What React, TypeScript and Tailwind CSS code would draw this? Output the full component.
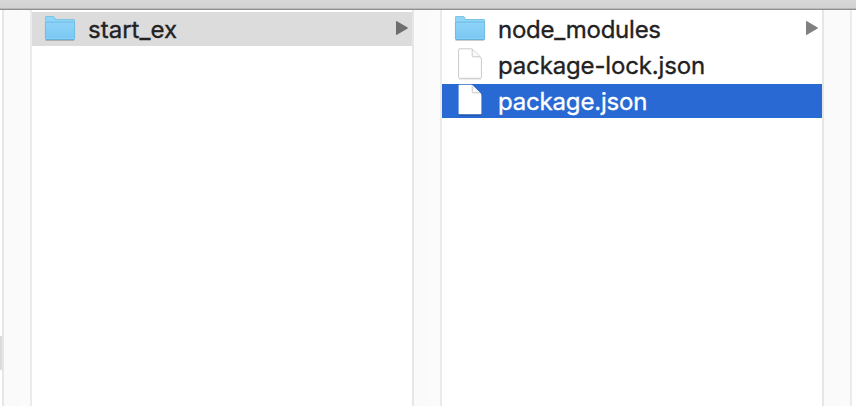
type Kind = 'folder' | 'file';

function FolderIcon() {
  return (
    <svg className="block h-[34px] w-[34px]" viewBox="0 0 34 34">
      <defs>
        <linearGradient id="front" x1="0" y1="0" x2="0" y2="1">
          <stop offset="0" stopColor="#8fd3f8" />
          <stop offset="1" stopColor="#77c7f3" />
        </linearGradient>
      </defs>
      <path d="M3.5 28.5H32.2" stroke="#000" strokeOpacity=".2" strokeWidth="1" />
      <path d="M3 27V5.4Q3 4 4.3 4H10.8Q12 4 12.6 5L13.8 7H31.7Q33 7 33 8.3V27Z" fill="#7ac4e8" />
      <path d="M3.8 9.4V5.8Q3.8 5 4.6 5H10.6Q11.5 5 12 6L13.2 8H31.4Q32.2 8 32.2 8.7V9.4Z" fill="#91d5f6" />
      <path d="M3 10H33V26.8Q33 28 31.7 28H4.3Q3 28 3 26.8Z" fill="url(#front)" />
      <path d="M3.8 10.3H32.2" stroke="#70bfe8" strokeWidth=".9" />
      <path d="M3.4 10V27M32.6 10V27" stroke="#6bb7df" strokeWidth=".8" />
      <path d="M3.8 26.3H32.2" stroke="#91d2f5" strokeWidth=".8" />
      <path d="M3.8 27.5H32.2" stroke="#65b0d9" strokeWidth="1" />
    </svg>
  );
}

function FileIcon({ selected = false }: { selected?: boolean }) {
  return (
    <svg className="block h-[34px] w-[34px]" viewBox="0 0 34 34">
      <path d="M7 31H29" stroke="#000" strokeOpacity={selected ? 0.35 : 0.15} strokeWidth="1" />
      <path
        d="M7.2 .8H19Q20.2 .8 21.2 1.7L28.4 9Q29.4 10 29.4 11.4V29.5Q29.4 30.3 28.6 30.3H7.4Q6.6 30.3 6.6 29.5V1.6Q6.6 .8 7.4 .8Z"
        fill="#fff"
        stroke={selected ? 'none' : '#cacaca'}
        strokeWidth="1"
      />
      <path d="M20.2 1.4V8Q20.2 8.8 21.2 8.8H28" fill="#fafafa" stroke="#c4c4c4" strokeWidth=".9" />
    </svg>
  );
}

function Row({ kind, name, text, selected = false, active = false }: { kind: Kind; name: string; text: string; selected?: boolean; active?: boolean }) {
  return (
    <div className={`flex h-[34px] shrink-0 items-center ${selected ? 'bg-[#2869d3] text-white' : 'text-[#222]'} ${active ? 'bg-[#dcdcdc]' : ''}`}>
      <div className="ml-[10px] w-[34px] shrink-0">
        {kind === 'folder' ? <FolderIcon /> : <FileIcon selected={selected} />}
      </div>
      <span className={`ml-3 h-[34px] grow whitespace-nowrap text-[24px] leading-[36px] [-webkit-text-stroke-width:0.35px] ${text}`}>{name}</span>
      {kind === 'folder' && (
        <svg className="mr-1 h-[34px] w-3 shrink-0" viewBox="0 0 12 34">
          <path d="M0 9.7Q0 8.8 1 9.3L11.2 15.2Q12.6 16 11.2 16.8L1 22.7Q0 23.2 0 22.3Z" fill={active ? '#6e6e6e' : '#808080'} />
        </svg>
      )}
    </div>
  );
}

function Gutter() {
  return (
    <div className="flex w-[30px] shrink-0 border-x-2 border-l-[#e6e6e6] border-r-[#ebebeb] bg-[#fafafa]">
      <div className="ml-auto w-[10px] bg-[#fbfbfb]" />
    </div>
  );
}

export default function App() {
  return (
    <div className="flex h-[406px] w-[856px] flex-col overflow-hidden bg-white font-['Inter','Liberation_Sans',sans-serif]">
      <div className="h-[10px] shrink-0 border-b border-[#8f8f8f] bg-linear-to-b from-[#d7d7d8] to-[#d2d2d3]">
        <div className="mt-[8px] h-px bg-[#b9b9b9]" />
      </div>
      <div className="flex min-h-0 grow">
        <div className="w-[2px] shrink-0 pt-[326px]">
          <div className="h-[34px] bg-[#dcdcdc]" />
        </div>
        <Gutter />
        <div className="flex w-[380px] shrink-0 flex-col pt-[2px]">
          <Row kind="folder" name="start_ex" text="tracking-[0.02px]" active />
        </div>
        <Gutter />
        <div className="flex w-[380px] shrink-0 flex-col gap-[2px] pt-[2px]">
          <Row kind="folder" name="node_modules" text="tracking-[-0.25px]" />
          <Row kind="file" name="package-lock.json" text="tracking-[-0.15px]" />
          <Row kind="file" name="package.json" text="tracking-[-0.18px]" selected />
        </div>
        <Gutter />
      </div>
    </div>
  );
}
